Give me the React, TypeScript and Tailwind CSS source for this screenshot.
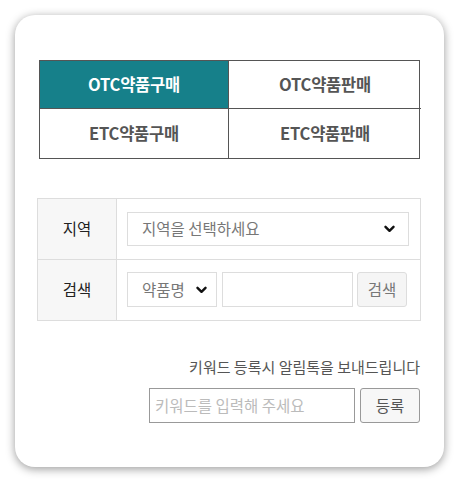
import React from "react";

const Chevron = () => (
  <svg width="11" height="8" viewBox="0 0 11 8" className="block">
    <polyline points="1.5,1.8 5.5,5.8 9.5,1.8" fill="none" stroke="#111" strokeWidth="2.4" strokeLinecap="round" strokeLinejoin="round" />
  </svg>
);

export default function App() {
  const font = { fontFamily: '"Noto Sans CJK KR", "Noto Sans", sans-serif' };
  return (
    <div className="w-[460px] h-[483px] bg-white pt-[15px] pl-[15px]" style={font}>
      <div className="w-[429px] h-[452px] rounded-[20px] bg-white shadow-[0_2px_10px_rgba(0,0,0,0.4)] pt-[45px] pl-[22px]">
        {/* tabs */}
        <div className="ml-[2px] w-[381px] grid grid-cols-[189px_192px] border border-[#555] text-[16.5px] font-bold tracking-[-0.2px]">
          <div className="h-[48px] bg-[#16808a] text-white flex items-center justify-center border-r border-b border-[#555]">OTC약품구매</div>
          <div className="h-[48px] text-[#555] flex items-center justify-center border-b border-[#555]">OTC약품판매</div>
          <div className="h-[49px] text-[#555] flex items-center justify-center border-r border-[#555]">ETC약품구매</div>
          <div className="h-[49px] text-[#555] flex items-center justify-center">ETC약품판매</div>
        </div>

        {/* search table */}
        <div className="mt-[39px] w-[384px] border border-[#ddd] text-[15.5px]">
          <div className="flex h-[61px] border-b border-[#ddd]">
            <div className="w-[79px] bg-[#f7f7f7] border-r border-[#ddd] flex items-center justify-center text-[#222]">지역</div>
            <div className="flex-1 pl-[10px] pr-[11px] pt-[13px]">
              <div className="h-[34px] border border-[#ddd] flex items-center justify-between pl-[14px] pr-[13px] text-[#777]">
                <span>지역을 선택하세요</span>
                <Chevron />
              </div>
            </div>
          </div>
          <div className="flex h-[60px]">
            <div className="w-[79px] bg-[#f7f7f7] border-r border-[#ddd] flex items-center justify-center text-[#222]">검색</div>
            <div className="flex-1 pl-[10px] pt-[12px] flex items-start">
              <div className="w-[90px] h-[35px] border border-[#ddd] flex items-center justify-between pl-[14px] pr-[9px] text-[#777]">
                <span>약품명</span>
                <Chevron />
              </div>
              <div className="ml-[5px] w-[131px] h-[35px] border border-[#ddd]" />
              <div className="ml-[4px] w-[50px] h-[35px] border border-[#ddd] rounded-[3px] bg-[#f5f5f5] flex items-center justify-center text-[#777]">검색</div>
            </div>
          </div>
        </div>

        {/* keyword */}
        <div className="w-[383px] mt-[36px] text-right text-[15px] text-[#555] leading-[20px]">키워드 등록시 알림톡을 보내드립니다</div>
        <div className="mt-[11px] flex ml-[112px]">
          <div className="w-[206px] h-[35px] border border-[#999] flex items-center pl-[5px] text-[15.5px] text-[#bbb]">키워드를 입력해 주세요</div>
          <div className="ml-[5px] w-[60px] h-[35px] border border-[#999] rounded-[3px] bg-[#f7f7f7] flex items-center justify-center text-[15.5px] text-[#555]">등록</div>
        </div>
      </div>
    </div>
  );
}
